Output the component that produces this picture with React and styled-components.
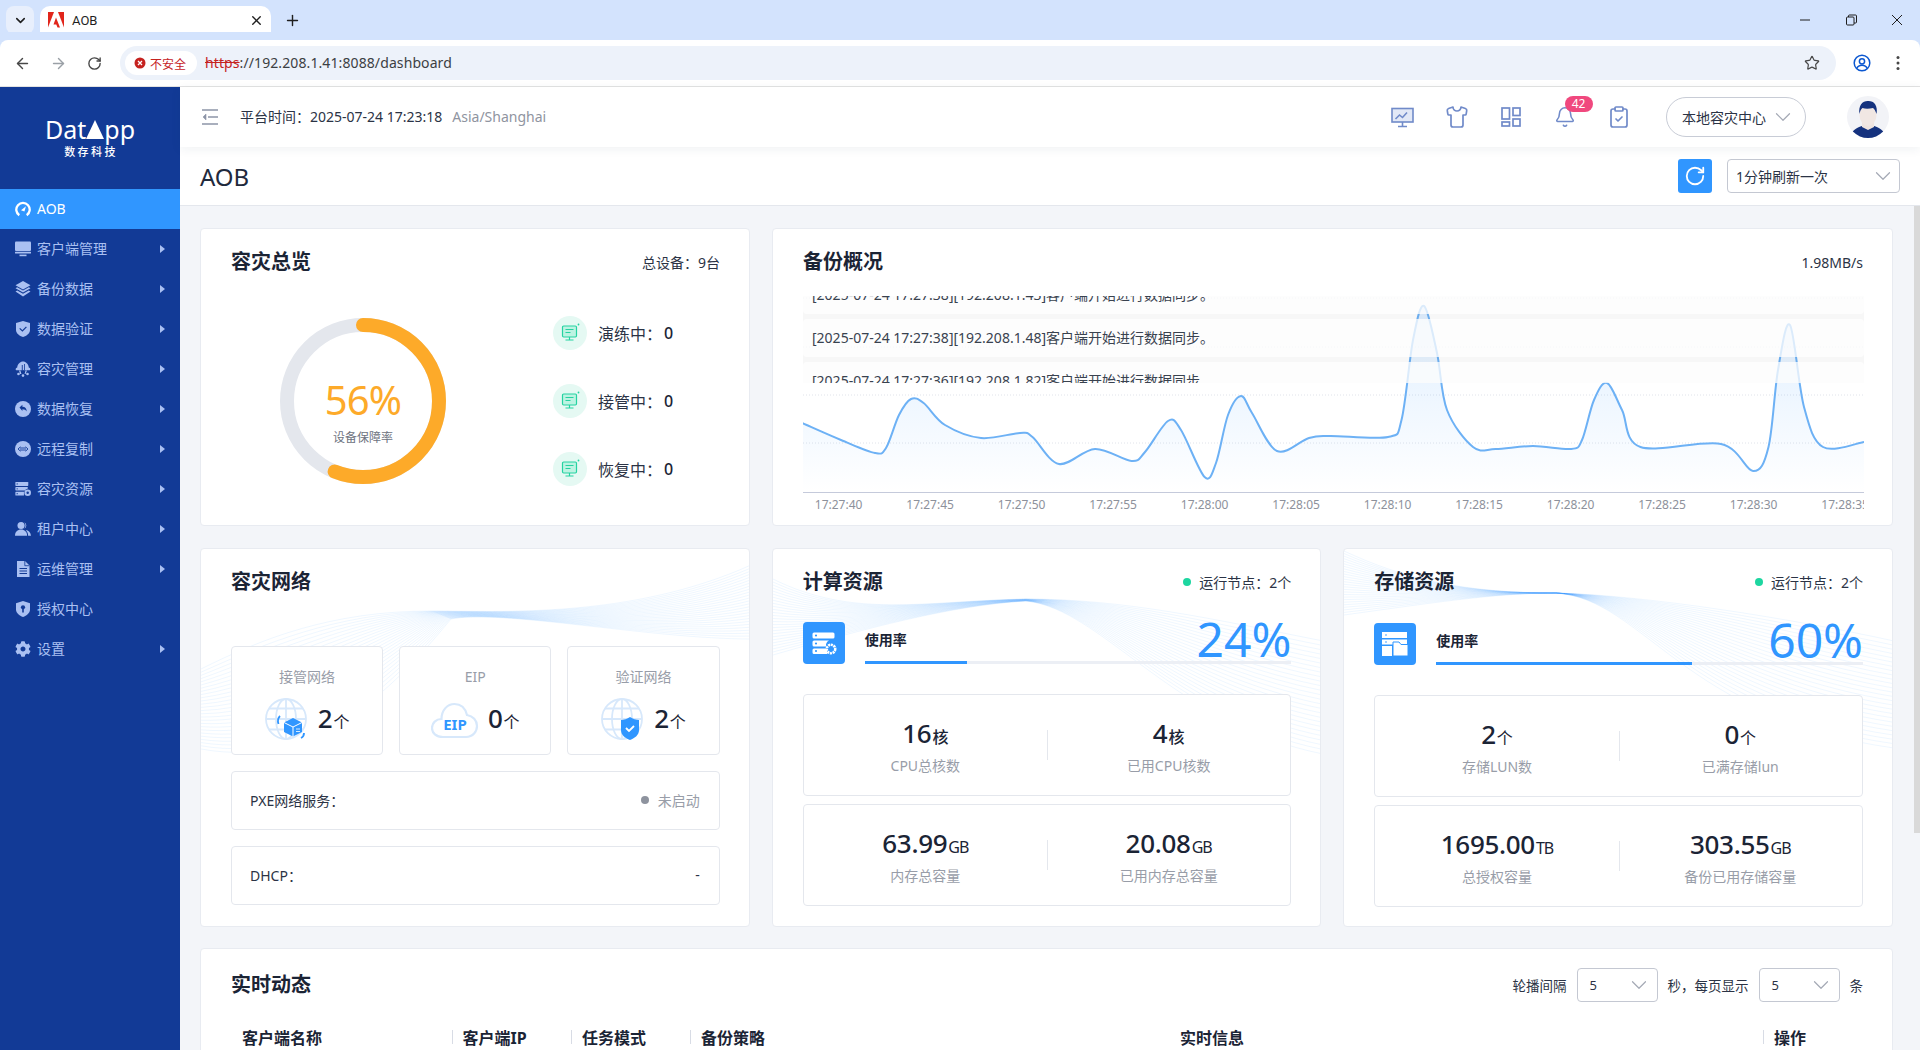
import React from 'react';
import styled, { createGlobalStyle } from 'styled-components';
import { FaCog } from 'react-icons/fa';
import { ChevronDown, X, Plus, ArrowLeft, ArrowRight, RotateCw, Star, Shirt, Bell, ClipboardCheck } from 'lucide-react';

const SANS = `"Noto Sans", "Noto Sans CJK SC", sans-serif`;

const Global = createGlobalStyle`
  html, body { margin: 0; height: 100%; overflow: hidden; background: #fff; }
  body { font-family: ${SANS}; font-size: 14px; color: #2b3345; }
  #root { height: 100%; }
  * { box-sizing: border-box; }
`;

const Window = styled.div`display: flex; flex-direction: column; height: 1050px; width: 1920px;`;

/* browser chrome */
const TabStrip = styled.div`
  height: 40px; background: #d3e3fd; display: flex; align-items: flex-end; padding-left: 6px; flex: none;
`;
const TabMenu = styled.div`
  width: 28px; height: 28px; margin: 0 6px 6px 0; border-radius: 8px; background: #e8effc;
  display: flex; align-items: center; justify-content: center; color: #1f1f1f;
`;
const Tab = styled.div`
  position: relative; width: 231px; height: 34px; background: #fff; border-radius: 10px 10px 0 0;
  display: flex; align-items: center; padding: 0 7px 6px 8px; gap: 8px;
  font-family: Roboto, "Noto Sans CJK SC", sans-serif; font-size: 13px; color: #1f1f1f;
  &::before, &::after { content: ''; position: absolute; bottom: 0; width: 8px; height: 8px; }
  &::before { left: -8px; background: radial-gradient(circle at 0 0, transparent 8px, #fff 8.5px); }
  &::after { right: -8px; background: radial-gradient(circle at 100% 0, transparent 8px, #fff 8.5px); }
`;
const TabTitle = styled.span`flex: 1;`;
const NewTab = styled.div`margin: 0 0 6px 7px; height: 28px; width: 28px; display: flex; align-items: center; justify-content: center; color: #1f1f1f;`;
const WinControls = styled.div`
  margin-left: auto; align-self: flex-start; height: 40px; display: flex; align-items: center; color: #1f1f1f;
`;
const WinBtn = styled.div`width: 46px; display: flex; justify-content: center; align-items: center;`;
const Toolbar = styled.div`
  height: 47px; flex: none; background: #fff; border-radius: 8px 8px 0 0; border-bottom: 1px solid #e3e3e3;
  display: flex; align-items: center; position: relative;
  box-shadow: 0 -8px 0 0 #d3e3fd;
`;
const NavBtn = styled.div`
  width: 36px; height: 34px; display: flex; align-items: center; justify-content: center;
  color: ${p => p.$dim ? '#9aa0a6' : '#474747'}; flex: none;
`;
const NavGroup = styled.div`display: flex; padding-left: 4px; width: 120px; flex: none;`;
const Omnibox = styled.div`
  width: 1716px; height: 34px; border-radius: 17px; background: #edf2fa; flex: none;
  display: flex; align-items: center; padding: 0 16px 0 5px; font-family: "Noto Sans", sans-serif; font-size: 14px; color: #3c4043;
`;
const Chip = styled.div`
  height: 24px; width: 72px; border-radius: 12px; background: #fff; display: flex; align-items: center;
  gap: 4px; padding-left: 9px; font-family: "Noto Sans CJK SC", sans-serif; font-size: 12px; color: #c5221f; flex: none; margin-right: 8px;
`;
const UrlText = styled.span`letter-spacing: .1px; padding-bottom: 2px; white-space: nowrap;`;
const Scheme = styled.span`color: #c5221f; text-decoration: line-through;`;
const StarWrap = styled.div`margin-left: auto; display: flex; color: #474747;`;
const ToolEnd = styled.div`display: flex; align-items: center; gap: 25px; padding-left: 16.5px; color: #474747;`;

/* app */
const AppShell = styled.div`flex: 1; min-height: 0; display: flex;`;
const Sidebar = styled.aside`width: 180px; flex: none; background: #123a96; color: #aac0f2;`;
const Logo = styled.div`
  height: 102px; display: flex; flex-direction: column; align-items: center; padding-top: 26px; color: #fff;
`;
const LogoMark = styled.div`
  display: flex; align-items: center; font-family: "Noto Sans", sans-serif; font-size: 25px; line-height: 32px;
`;
const LogoSub = styled.div`
  font-family: "Noto Sans CJK SC", sans-serif; font-weight: 500; font-size: 11px; letter-spacing: 2.4px; line-height: 14px; margin-top: -1px; padding-left: 2px;
`;
const MenuItem = styled.div`
  height: 40px; display: flex; align-items: center; padding: 0 15.5px 0 15px; gap: 6px;
  background: ${p => p.$active ? '#3096ff' : 'transparent'}; color: ${p => p.$active ? '#fff' : '#aac0f2'};
`;
const MenuIcon = styled.span`width: 16px; height: 16px; display: flex; flex: none; font-size: 16px;`;
const MenuLabel = styled.span`flex: 1; font-size: 14px; padding-bottom: 2px;`;
const Caret = styled.span`
  width: 0; height: 0; border-style: solid; border-width: 4.5px 0 4.5px 5px; border-color: transparent transparent transparent #aac0f2;
`;

const Main = styled.div`flex: 1; min-width: 0; display: flex; flex-direction: column; background: #f3f5f9;`;
const Header = styled.header`
  height: 60px; flex: none; background: #fff; display: flex; align-items: center; padding: 0 31px 0 22px;
  box-shadow: 0 2px 10px rgba(30, 50, 90, .07); position: relative; z-index: 2;
`;
const Toggle = styled.div`width: 16px; height: 16px; color: #8d95a8; margin-right: 22px; display: flex;`;
const HeaderText = styled.span`color: #2b3345; white-space: nowrap; padding-bottom: 2px;`;
const HeaderZone = styled.span`color: #8f94a0; margin-left: 10px; white-space: nowrap; padding-bottom: 2px;`;
const HeadIcons = styled.div`margin-left: auto; display: flex; align-items: center; color: #708ac9;`;
const HeadIcon = styled.div`
  position: relative; width: 24px; height: 24px; display: flex; align-items: center; justify-content: center; margin-left: ${p => p.$gap}px;
`;
const Badge = styled.span`
  position: absolute; left: 12px; top: -9px; width: 28px; height: 16px; border-radius: 8px; background: #f0487e;
  color: #fff; font-size: 12px; line-height: 16px; text-align: center;
`;
const Center = styled.div`
  margin-left: 35.5px; width: 140px; height: 40px; border: 1px solid #c8ccd6; border-radius: 20px; display: flex; align-items: center;
  justify-content: space-between; padding: 0 9px 0 15px; color: #2b3345; white-space: nowrap;
`;
const Chev = styled(ChevronDown)`color: #a4a9b5; flex: none;`;
const Avatar = styled.div`margin-left: 41px; width: 42px; height: 42px; flex: none; display: flex;`;

const TitleBar = styled.div`
  height: 59px; flex: none; background: #fff; border-bottom: 1px solid #e4e7ed; display: flex; align-items: center;
  padding: 0 20px; font-size: 24px; color: #1f2a3d;
`;
const TitleTools = styled.div`margin-left: auto; display: flex; align-items: center; gap: 15px;`;
const RefreshBtn = styled.div`
  width: 34px; height: 34px; border-radius: 3px; background: #3096ff; color: #fff; display: flex; align-items: center; justify-content: center;
`;
const Select = styled.div`
  width: ${p => p.$w}px; height: 34px; border: 1px solid #c4c8d2; border-radius: 4px; background: #fff; display: flex; align-items: center;
  justify-content: space-between; padding: 0 ${p => p.$pr}px 0 ${p => p.$pl}px; font-size: ${p => p.$fs || 14}px; color: #2b3345; white-space: nowrap; flex: none;
`;

const ScrollArea = styled.div`flex: 1; min-height: 0; display: flex;`;
const Scroll = styled.div`flex: 1; min-width: 0; overflow: hidden; padding: 22px 21px 20px 20px;`;
const Rail = styled.div`width: 6px; flex: none;`;
const Thumb = styled.div`height: 627px; background: #d9d9d9;`;
const TopRow = styled.div`display: grid; grid-template-columns: 550px 1fr; gap: 22px;`;
const MidRow = styled.div`display: grid; grid-template-columns: repeat(3, 1fr); gap: 22px; margin-top: 22px;`;

const Card = styled.section`
  position: relative; isolation: isolate; overflow: hidden; background: #fff; border: 1px solid #e8ebf1; border-radius: 4px;
  padding: 0 29px 0 30px; height: ${p => p.$h}px; margin-top: ${p => p.$mt || 0}px;
`;
const CardHead = styled.div`height: ${p => p.$h || 66}px; display: flex; align-items: center; justify-content: space-between;`;
const CardTitle = styled.h2`margin: 0; font-size: 20px; font-weight: 700; color: #1b2435; line-height: 28px;`;
const CardNote = styled.div`display: flex; align-items: center; gap: 8px; font-size: 14px; color: #2b3345; white-space: nowrap;`;
const Dot = styled.i`width: 8px; height: 8px; border-radius: 50%; background: ${p => p.$c}; flex: none;`;

/* overview */
const OverviewBody = styled.div`display: flex; align-items: flex-start; padding: 23px 0 0 49px; gap: 107px;`;
const Donut = styled.div`position: relative; width: 166px; height: 166px; flex: none;`;
const DonutText = styled.div`
  position: absolute; inset: 0; display: flex; flex-direction: column; align-items: center; justify-content: center;
`;
const DonutValue = styled.div`font-size: 40px; line-height: 50px; color: #fdaa29; letter-spacing: -.8px; margin-top: 20px;`;
const DonutLabel = styled.div`font-size: 12px; line-height: 18px; color: #6d7280; margin-top: 4px;`;
const Stats = styled.div`display: flex; flex-direction: column; gap: 34px; margin-top: -2px;`;
const Stat = styled.div`display: flex; align-items: center; gap: 11px; font-size: 16px; color: #2b3345;`;
const StatIcon = styled.div`
  width: 34px; height: 34px; border-radius: 50%; background: #e5f9f3; display: flex; align-items: center; justify-content: center; flex: none;
`;
const StatValue = styled.span`font-weight: 500; color: #1b2435; margin-left: -9px;`;

/* backup */
const ChartWrap = styled.div`position: relative; margin-right: -1px; height: 225px;`;
const ChartSvg = styled.svg`display: block;`;
const LogList = styled.div`
  position: absolute; left: 0; right: 0; top: 1px; height: 87px; overflow: hidden; display: flex; flex-direction: column; gap: 5px;
  background: rgba(60, 60, 60, .04);
`;
const LogItem = styled.div`
  flex: none; height: 38px; line-height: 38px; padding: 0 9px; border-radius: 4px; background: rgba(255, 255, 255, .76); color: #39424f; font-size: 14px; white-space: nowrap;
  margin-top: ${p => p.$first ? -20 : 0}px;
`;

/* network */
const NetRow = styled.div`display: grid; grid-template-columns: repeat(3, 1fr); gap: 16px; margin-top: 31px;`;
const NetBox = styled.div`
  height: 109px; border: 1px solid #e4e7ed; border-radius: 4px; background: #fff; display: flex; flex-direction: column; align-items: center; padding-top: 20px;
`;
const NetName = styled.div`font-size: 14px; line-height: 20px; color: #989da8;`;
const NetValue = styled.div`display: flex; align-items: center; gap: 9px; margin-top: 12px; height: 42px;`;
const Num = styled.div`color: #1b2435; font-size: 26px; font-weight: 500; letter-spacing: -.3px; line-height: 34px; white-space: nowrap;`;
const Unit = styled.span`font-size: 16px; font-weight: ${p => p.$b ? 500 : 400}; letter-spacing: ${p => p.$tight ? '-1px' : '0'}; margin-left: 1px;`;
const InfoRow = styled.div`
  height: 59px; margin-top: 16px; border: 1px solid #e4e7ed; border-radius: 4px; background: #fff; display: flex; align-items: center;
  justify-content: space-between; padding: 0 19px 2px 18px; color: #2b3345;
`;
const Off = styled.div`display: flex; align-items: center; gap: 9px; color: #989da8;`;

/* resources */
const UseRow = styled.div`display: flex; gap: 20px; margin-top: ${p => p.$mt}px;`;
const Tile = styled.div`
  width: 42px; height: 42px; border-radius: 4px; background: #3096ff; flex: none; display: flex; align-items: center; justify-content: center;
`;
const Meter = styled.div`flex: 1; display: flex; flex-direction: column; justify-content: space-between;`;
const MeterHead = styled.div`display: flex; justify-content: space-between; align-items: flex-start; height: 39px;`;
const MeterLabel = styled.div`font-size: 14px; font-weight: 700; line-height: 20px; margin-top: 8px; color: #1b2435;`;
const Percent = styled.div`font-size: 48px; line-height: 34px; color: #3096ff;`;
const Track = styled.div`height: 3px; background: #eceff5;`;
const Fill = styled.div`height: 3px; width: ${p => p.$pct}%; background: #3096ff;`;
const Boxes = styled.div`display: flex; flex-direction: column; gap: 8px; margin-top: 30px;`;
const Box = styled.div`
  height: 102px; border: 1px solid #e4e7ed; border-radius: 4px; background: #fff; display: grid; grid-template-columns: 1fr 1fr; position: relative;
  align-items: center; padding-top: 2px;
  &::before { content: ''; position: absolute; left: 50%; top: 35px; height: 30px; border-left: 1px solid #e4e7ed; }
`;
const Cell = styled.div`display: flex; flex-direction: column; align-items: center;`;
const CellLabel = styled.div`font-size: 14px; line-height: 20px; color: #989da8; margin-top: 2px; white-space: nowrap;`;

/* live */
const LiveTools = styled.div`display: flex; align-items: center; gap: 10px; font-size: 13.5px; color: #2b3345;`;
const TableHead = styled.div`
  display: grid; grid-template-columns: 220.6px 119.4px 119px 479px 594px 100px; height: 32px; align-items: center;
`;
const HeadCell = styled.div`
  height: 14px; display: flex; align-items: center; padding-left: 10px; font-size: 16px; font-weight: 700; color: #1b2435; white-space: nowrap;
  border-left: 1px solid ${p => p.$sep ? '#d8dce5' : 'transparent'};
`;

/* ---------- drawings ---------- */
const bg = '#123a96';
const icons = {
  gauge: <svg viewBox="0 0 16 16" width="16" height="16" fill="none"><path d="M4.3 14.2A6.7 6.7 0 1 1 11.7 14.2" stroke="currentColor" strokeWidth="2.3"/><path d="M11 5.2 9.4 10.6 6 9.2Z" fill="currentColor"/></svg>,
  monitor: <svg viewBox="0 0 16 16" width="16" height="16" fill="currentColor"><rect y="0.5" width="16" height="9.5" rx="1"/><rect y="10.8" width="16" height="1.8" rx=".5"/><rect x="4.5" y="13.6" width="7" height="1.6"/></svg>,
  layers: <svg viewBox="0 0 16 16" width="16" height="16" fill="currentColor"><path d="M8 0 15.5 4.3 8 8.6.5 4.3Z"/><path d="M.5 7.2 2.2 6.2 8 9.6l5.8-3.4 1.7 1L8 11.6Z"/><path d="M.5 10.4 2.2 9.4 8 12.8l5.8-3.4 1.7 1L8 15.4Z"/></svg>,
  shield: <svg viewBox="0 0 16 16" width="16" height="16"><path d="M8 0 15 2v7c0 3.4-3.4 5.8-7 7-3.6-1.2-7-3.6-7-7V2Z" fill="currentColor"/><path d="M4.7 7.4 7.4 10l4-4.2" fill="none" stroke={bg} strokeWidth="1.2"/></svg>,
  cloud: <svg viewBox="0 0 16 16" width="16" height="16" fill="currentColor"><path d="M1.2 9.3C.2 8.6.6 6.6 2.2 6.4 2.6 3 5.2.6 8 .6s5.4 2.4 5.8 5.8c1.6.2 2 2.2 1 2.9Z"/><path d="M6.8 4h.9v5.2h-.9zM9.2 3h.8v6.2h-.8zM7.6 9h.8v4.5h-.8z" fill={bg}/><path d="M4 9.5h1.4l1 3.5H5Zm6.5 0H12l-1.400 3.500H9.600Z"/><circle cx="8" cy="14.600" r="1.300"/><circle cx="3.500" cy="13" r="1.300"/><circle cx="12.500" cy="13" r="1.300"/></svg>,
  restore: <svg viewBox="0 0 16 16" width="16" height="16"><circle cx="8" cy="8" r="8" fill="currentColor"/><path d="M4.500 6.600 7.400 3.800v1.900c2.800 0 4.300 1.800 4.300 4.900-.9-1.700-2.100-2.400-4.300-2.400v1.800Z" fill={bg}/></svg>,
  remote: <svg viewBox="0 0 16 16" width="16" height="16"><circle cx="8" cy="8" r="8" fill="currentColor"/><path d="M5.500 5.800 3 8l2.500 2.200M10.500 5.800 13 8l-2.500 2.200M5 7h6M5 9h6" fill="none" stroke={bg} strokeWidth=".9"/></svg>,
  server: <svg viewBox="0 0 17 16" width="17" height="16" fill="currentColor"><path d="M1 .5h12.500a.6.600 0 0 1 .6.600v3a.6.600 0 0 1-.6.600H1a.6.600 0 0 1-.6-.600v-3A.6.600 0 0 1 1 .5Z"/><path d="M1 6h12.500v1.800a3.600 3.600 0 0 0-3 1.700H1a.6.600 0 0 1-.6-.600V6.600A.6.600 0 0 1 1 6ZM1 11h8.500v4H1a.6.600 0 0 1-.6-.600v-2.800A.6.600 0 0 1 1 11Z"/><circle cx="13.500" cy="12" r="3.500"/><circle cx="13.500" cy="12" r="1.300" fill={bg}/><circle cx="2.300" cy="2.600" r=".7" fill={bg}/><circle cx="2.300" cy="7.800" r=".7" fill={bg}/><circle cx="2.300" cy="13" r=".7" fill={bg}/></svg>,
  users: <svg viewBox="0 0 18 16" width="18" height="16" fill="currentColor"><circle cx="6.800" cy="4" r="4"/><path d="M0 15.500c0-4 2.800-6.800 6.800-6.800s6.800 2.800 6.800 6.800Z"/><path d="M10.500 .5a4 4 0 0 1 0 7.200c1.800-1.800 1.800-5.400 0-7.200ZM12 9c3.300.2 5.600 2.800 6 6.500h-3.200c0-2.600-1.100-4.800-2.800-6.500Z"/></svg>,
  file: <svg viewBox="0 0 16 16" width="16" height="16"><path d="M2 0h8l4.500 4.500V16H2Z" fill="currentColor"/><path d="M9.800 0v4.700h4.700" fill="none" stroke={bg} strokeWidth=".8"/><path d="M4.500 7.500h7.500M4.500 10h7.500M4.500 12.500h7.500" stroke={bg} strokeWidth="1"/></svg>,
  auth: <svg viewBox="0 0 16 16" width="16" height="16"><path d="M8 0 15 2.200v6.300c0 3.600-3.400 6.200-7 7.500-3.600-1.300-7-3.900-7-7.500V2.200Z" fill="currentColor"/><circle cx="8" cy="6.300" r="2.100" fill={bg}/><path d="M7.200 7.500h1.600v4H7.200Z" fill={bg}/></svg>,
  cog: <FaCog size={16}/>,
};

const menu = [
  ['AOB', 'gauge', false],
  ['客户端管理', 'monitor', true],
  ['备份数据', 'layers', true],
  ['数据验证', 'shield', true],
  ['容灾管理', 'cloud', true],
  ['数据恢复', 'restore', true],
  ['远程复制', 'remote', true],
  ['容灾资源', 'server', true],
  ['租户中心', 'users', true],
  ['运维管理', 'file', true],
  ['授权中心', 'auth', false],
  ['设置', 'cog', true],
];

const catmull = pts => {
  let d = `M${pts[0][0]} ${pts[0][1]}`;
  for (let i = 0; i < pts.length - 1; i++) {
    const p0 = pts[Math.max(i - 1, 0)], p1 = pts[i], p2 = pts[i + 1], p3 = pts[Math.min(i + 2, pts.length - 1)];
    const c1x = p1[0] + (p2[0] - p0[0]) / 6, c1y = p1[1] + (p2[1] - p0[1]) / 6;
    const c2x = p2[0] - (p3[0] - p1[0]) / 6, c2y = p2[1] - (p3[1] - p1[1]) / 6;
    d += ` C${c1x.toFixed(1)} ${c1y.toFixed(1)} ${c2x.toFixed(1)} ${c2y.toFixed(1)} ${p2[0]} ${p2[1]}`;
  }
  return d;
};

const curve = [
  [802,423],[841,440],[875,453],[886,448],[899,415],[911,399],[923.6,403],[945,425],[981,438],[1020,433],[1032.5,437],[1059,464],[1095,449],[1131.4,461],[1145,452],[1168,421],[1181,430],[1204.6,477],[1216,463],[1228,415],[1241,396],[1252,413],[1277,451],[1309,438],[1330,436],[1388,437],[1401.5,420],[1413,340],[1424,306],[1437,353],[1447,410],[1473,447],[1495.6,449],[1533,446],[1571,449],[1582,440],[1594,400],[1607,383],[1622,410],[1640.5,447],[1721,444],[1753,471],[1768.5,447],[1778,370],[1790,325],[1804,407],[1823,447],[1864,442],
];
const times = ['17:27:40','17:27:45','17:27:50','17:27:55','17:28:00','17:28:05','17:28:10','17:28:15','17:28:20','17:28:25','17:28:30','17:28:35'];

const BackupChart = () => {
  const line = catmull(curve);
  return (
    <ChartSvg width="1061" height="225" viewBox="803 295 1061 225">
      <defs>
        <linearGradient id="areaFill" x1="0" y1="305" x2="0" y2="492" gradientUnits="userSpaceOnUse">
          <stop offset="0" stopColor="#3096ff" stopOpacity=".16"/>
          <stop offset="1" stopColor="#3096ff" stopOpacity="0"/>
        </linearGradient>
      </defs>
      {[298, 347, 395, 443].map(y => <line key={y} x1="803" x2="1864" y1={y} y2={y} stroke="#e0e3ea" strokeDasharray="1 2"/>)}
      <path d={`${line} L1864 492 L802 492 Z`} fill="url(#areaFill)"/>
      <path d={line} fill="none" stroke="#6db1f5" strokeWidth="2"/>
      <line x1="803" x2="1864" y1="492.500" y2="492.500" stroke="#c5cadb"/>
      {times.map((t, i) => (
        <text key={t} x={838.6 + i * 91.5} y="509" textAnchor="middle" fontSize="12" fill="#8d919b" fontFamily={SANS}>{t}</text>
      ))}
    </ChartSvg>
  );
};

const WaveSvg = styled.svg`position: absolute; left: 0; top: 0; z-index: -1; pointer-events: none;`;
const Wave = ({ a, b, n = 26 }) => {
  const paths = [];
  for (let i = 0; i < n; i++) {
    const t = i / (n - 1);
    const v = a.map((x, k) => x + (b[k] - x) * t);
    paths.push(`M${v[0]} ${v[1]}C${v[2]} ${v[3]} ${v[4]} ${v[5]} ${v[6]} ${v[7]}C${v[8]} ${v[9]} ${v[10]} ${v[11]} ${v[12]} ${v[13]}`);
  }
  return (
    <WaveSvg width="550" height="379" viewBox="0 0 550 379" fill="none">
      {paths.map((d, i) => <path key={i} d={d} stroke="#3096ff" strokeOpacity=".1" strokeWidth=".8"/>)}
    </WaveSvg>
  );
};

const StatGlyph = () => (
  <svg width="20" height="20" viewBox="0 0 20 20" fill="none" stroke="#25d3a1" strokeWidth="1.200">
    <rect x="2.500" y="3" width="14" height="11" rx="1.200" fill="#bdf3e2"/>
    <path d="M5.500 6.500h8M5.500 9.500h5M9.500 14v3M5.500 17h8"/>
    <circle cx="18.500" cy="1.500" r=".9" fill="#25d3a1" stroke="none"/>
  </svg>
);

const Globe = ({ children }) => (
  <svg width="44" height="44" viewBox="0 0 44 44" fill="none">
    <g stroke="#d7e8fb" strokeWidth="1.800">
      <circle cx="21" cy="21" r="20"/><ellipse cx="21" cy="21" rx="10" ry="20"/><path d="M21 1v40M1 21h40M4 10.500h34M4 31.500h34"/>
    </g>
    {children}
  </svg>
);

const NetIcon1 = () => (
  <Globe>
    <path d="M28 20 37 24.500V34L28 38.500 19 34V24.500Z" fill="#3096ff"/>
    <path d="M19 24.500 28 29 37 24.500M28 29V38.500" stroke="#fff"/>
    <path d="M31 31h4M31 33.500h4" stroke="#fff" strokeWidth=".8"/>
    <path d="M15 18c-2 2-2.500 5-1.500 8M36 40c2-1 3-3 3-5" stroke="#3096ff" strokeWidth="1.800"/>
  </Globe>
);
const NetIcon2 = () => (
  <svg width="48" height="38" viewBox="0 0 48 38">
    <path d="M12 36C5 36 1 32 1 27s4-9 9.500-9c0-9 6-15 13-15s11 5 12.500 11c6 1 10 5.500 10 11s-4 11-11 11Z" fill="#fff" stroke="#d7e8fb" strokeWidth="2.200"/>
    <text x="24" y="29" textAnchor="middle" fontSize="15" fontWeight="700" fill="#3096ff" fontFamily={SANS}>EIP</text>
  </svg>
);
const NetIcon3 = () => (
  <Globe>
    <path d="M29 19c3 2 6 3 9 3v10c0 5-4 8-9 10-5-2-9-5-9-10V22c3 0 6-1 9-3Z" fill="#3096ff"/>
    <path d="M25 30l3 3 5-5" fill="none" stroke="#fff" strokeWidth="1.800"/>
  </Globe>
);

const ServerGear = () => (
  <svg width="26" height="26" viewBox="0 0 26 26">
    <path d="M3 2.500h19a1.500 1.500 0 0 1 1.500 1.500v3a1.500 1.500 0 0 1-1.500 1.500H3A1.500 1.500 0 0 1 1.500 7V4A1.500 1.500 0 0 1 3 2.500Z" fill="#fff"/>
    <path d="M3 10.500h15a6 6 0 0 0-3 6H3A1.500 1.500 0 0 1 1.500 15v-3A1.500 1.500 0 0 1 3 10.500Z" fill="#fff"/>
    <path d="M3 18.500h12.500l1 5.500H3a1.500 1.500 0 0 1-1.500-1.500V20A1.500 1.500 0 0 1 3 18.500Z" fill="#fff"/>
    <circle cx="20" cy="19" r="4" fill="none" stroke="#fff" strokeWidth="3" strokeDasharray="2 .6"/>
    <circle cx="20" cy="19" r="2.500" fill="none" stroke="#3096ff" strokeWidth="1"/>
    <circle cx="5" cy="5.500" r="1.100" fill="#3096ff"/><circle cx="5" cy="13.500" r="1.100" fill="#3096ff"/><circle cx="5" cy="21" r="1.100" fill="#3096ff"/>
  </svg>
);
const StorageGlyph = () => (
  <svg width="28" height="26" viewBox="0 0 28 26" fill="#fff">
    <rect x="1" y="1" width="25" height="6"/><rect x="1" y="8.500" width="25" height="5"/>
    <rect x="1" y="15" width="10" height="10"/>
    <path d="M12 11h6l2 2.500h7V25H12Z" stroke="#3096ff" strokeWidth="1"/>
    <circle cx="5" cy="4" r=".8" fill="#3096ff"/><circle cx="5" cy="11" r=".8" fill="#3096ff"/>
  </svg>
);

const Stack2 = ({ n, u, b, tight }) => <Num>{n}<Unit $b={b} $tight={tight}>{u}</Unit></Num>;

const Tiny = ({ children }) => <svg width="14" height="14" viewBox="0 0 14 14" fill="none" stroke="currentColor" strokeWidth="1">{children}</svg>;

const BigChev = () => <Chev size={26} strokeWidth={1.100}/>;

export default function App() {
  return (
    <Window>
      <Global/>
      <TabStrip>
        <TabMenu><ChevronDown size={15} strokeWidth={2.500}/></TabMenu>
        <Tab>
          <svg width="16" height="16" viewBox="0 0 16 16">
            <path d="M0 0h6L0 15.500Z" fill="#e1251b"/><path d="M10 0h6v15.500Z" fill="#e1251b"/><path d="M8 5.500l4 10H9.500L8.300 12.500H5.500Z" fill="#e1251b"/>
          </svg>
          <TabTitle>AOB</TabTitle>
          <X size={15} strokeWidth={2.200}/>
        </Tab>
        <NewTab><Plus size={17} strokeWidth={2}/></NewTab>
        <WinControls>
          <WinBtn><Tiny><path d="M2 7h10"/></Tiny></WinBtn>
          <WinBtn><Tiny><rect x="2.500" y="4" width="7.500" height="8" rx="1"/><path d="M4.500 4V3a1 1 0 0 1 1-1h6a1 1 0 0 1 1 1v6a1 1 0 0 1-1 1h-1.500"/></Tiny></WinBtn>
          <WinBtn><Tiny><path d="M2 2l10 10M12 2 2 12"/></Tiny></WinBtn>
        </WinControls>
      </TabStrip>
      <Toolbar>
        <NavGroup>
          <NavBtn><ArrowLeft size={17} strokeWidth={2}/></NavBtn>
          <NavBtn $dim><ArrowRight size={17} strokeWidth={2}/></NavBtn>
          <NavBtn><RotateCw size={15} strokeWidth={2.200}/></NavBtn>
        </NavGroup>
        <Omnibox>
          <Chip>
            <svg width="12" height="12" viewBox="0 0 12 12"><circle cx="6" cy="6" r="5.500" fill="#c5221f"/><path d="M4 4l4 4M8 4 4 8" stroke="#fff" strokeWidth="1.300"/></svg>
            不安全
          </Chip>
          <UrlText><Scheme>https</Scheme>://192.208.1.41:8088/dashboard</UrlText>
          <StarWrap><Star size={16} strokeWidth={1.800}/></StarWrap>
        </Omnibox>
        <ToolEnd>
          <svg width="18" height="18" viewBox="0 0 18 18" fill="none" stroke="#0b57d0" strokeWidth="1.500"><circle cx="9" cy="9" r="7.800"/><circle cx="9" cy="7.300" r="2.600"/><path d="M3.800 14.500c1-2.400 3-3.200 5.200-3.200s4.200.8 5.200 3.200"/></svg>
          <svg width="4" height="16" viewBox="0 0 4 16" fill="#474747"><circle cx="2" cy="2.500" r="1.500"/><circle cx="2" cy="8" r="1.500"/><circle cx="2" cy="13.500" r="1.500"/></svg>
        </ToolEnd>
      </Toolbar>
      <AppShell>
        <Sidebar>
          <Logo>
            <LogoMark>
              Dat
              <svg width="18" height="19" viewBox="0 0 18 19"><path d="M9 0 18 19H0Z" fill="#fff"/></svg>
              pp
            </LogoMark>
            <LogoSub>数存科技</LogoSub>
          </Logo>
          {menu.map(([label, ic, arrow], i) => (
            <MenuItem key={label} $active={i === 0}>
              <MenuIcon>{icons[ic]}</MenuIcon>
              <MenuLabel>{label}</MenuLabel>
              {arrow && <Caret/>}
            </MenuItem>
          ))}
        </Sidebar>
        <Main>
          <Header>
            <Toggle>
              <svg width="16" height="16" viewBox="0 0 16 16" fill="none" stroke="currentColor" strokeWidth="1.600"><path d="M0 1h16M6 8h10M0 15h16"/><path d="M4 5 1 8l3 3Z" fill="currentColor" strokeWidth=".6"/></svg>
            </Toggle>
            <HeaderText>平台时间：2025-07-24 17:23:18</HeaderText>
            <HeaderZone>Asia/Shanghai</HeaderZone>
            <HeadIcons>
              <HeadIcon $gap={0}>
                <svg width="23" height="21" viewBox="0 0 23 21" fill="none" stroke="currentColor" strokeWidth="1.600"><rect x="1" y="1.500" width="21" height="13.500" fill="#e2e8f6"/><path d="M4.500 12l4-4 3 2.500L16 5.500M11.500 15v4.500M7 19.500h9"/></svg>
              </HeadIcon>
              <HeadIcon $gap={30}><Shirt size={24} strokeWidth={1.700}/></HeadIcon>
              <HeadIcon $gap={30}>
                <svg width="20" height="20" viewBox="0 0 20 20" fill="none" stroke="currentColor" strokeWidth="1.700"><rect x="1" y="1" width="7.500" height="11"/><rect x="12" y="1" width="7" height="7.500"/><rect x="1" y="15" width="7.500" height="4"/><rect x="12" y="12" width="7" height="7"/></svg>
              </HeadIcon>
              <HeadIcon $gap={30}><Bell size={22} strokeWidth={1.700}/><Badge>42</Badge></HeadIcon>
              <HeadIcon $gap={30}><ClipboardCheck size={24} strokeWidth={1.700}/></HeadIcon>
            </HeadIcons>
            <Center>本地容灾中心<BigChev/></Center>
            <Avatar>
              <svg width="42" height="42" viewBox="0 0 42 42">
                <defs><clipPath id="av"><circle cx="21" cy="21" r="21"/></clipPath></defs>
                <g clipPath="url(#av)">
                  <rect width="42" height="42" fill="#f2f3f7"/>
                  <path d="M3 42c1-8 8-11 12-12l6 3 6-3c4 1 11 4 12 12Z" fill="#15327e"/>
                  <path d="M15 27v4l6 3 6-3v-4Z" fill="#efe4df"/>
                  <ellipse cx="21" cy="19" rx="8.500" ry="11" fill="#f1e7e3"/>
                  <path d="M12.500 18C11 9 16 4.500 21.500 5 27 5 31 9.500 29.500 18c-1-3-2-5-3.500-6-4 1-8 1-10.500 0-1.500 1-2.500 3-3 6Z" fill="#15327e"/>
                </g>
              </svg>
            </Avatar>
          </Header>
          <TitleBar>
            AOB
            <TitleTools>
              <RefreshBtn><RotateCw size={22} strokeWidth={2}/></RefreshBtn>
              <Select $w={173} $pl={8} $pr={3}>1分钟刷新一次<BigChev/></Select>
            </TitleTools>
          </TitleBar>
          <ScrollArea>
            <Scroll>
              <TopRow>
                <Card $h={298}>
                  <CardHead>
                    <CardTitle>容灾总览</CardTitle>
                    <CardNote>总设备：9台</CardNote>
                  </CardHead>
                  <OverviewBody>
                    <Donut>
                      <svg width="166" height="166" viewBox="0 0 166 166" fill="none">
                        <circle cx="83" cy="83" r="76" stroke="#e4e7ed" strokeWidth="14"/>
                        <circle cx="83" cy="83" r="76" stroke="#fdaa29" strokeWidth="14" strokeLinecap="round"
                          strokeDasharray={`${2 * Math.PI * 76 * 0.56} ${2 * Math.PI * 76}`} transform="rotate(-90 83 83)"/>
                      </svg>
                      <DonutText>
                        <DonutValue>56%</DonutValue>
                        <DonutLabel>设备保障率</DonutLabel>
                      </DonutText>
                    </Donut>
                    <Stats>
                      {['演练中', '接管中', '恢复中'].map(l => (
                        <Stat key={l}><StatIcon><StatGlyph/></StatIcon><span>{l}：</span><StatValue>0</StatValue></Stat>
                      ))}
                    </Stats>
                  </OverviewBody>
                </Card>
                <Card $h={298}>
                  <CardHead>
                    <CardTitle>备份概况</CardTitle>
                    <CardNote>1.98MB/s</CardNote>
                  </CardHead>
                  <ChartWrap>
                    <BackupChart/>
                    <LogList>
                      <LogItem $first>[2025-07-24 17:27:38][192.208.1.43]客户端开始进行数据同步。</LogItem>
                      <LogItem>[2025-07-24 17:27:38][192.208.1.48]客户端开始进行数据同步。</LogItem>
                      <LogItem>[2025-07-24 17:27:36][192.208.1.82]客户端开始进行数据同步。</LogItem>
                    </LogList>
                  </ChartWrap>
                </Card>
              </TopRow>
              <MidRow>
                <Card $h={379}>
                  <Wave a={[0,120,60,90,130,62,230,62,300,62,430,70,550,16]} b={[0,200,120,222,200,130,250,70,300,60,450,90,550,90]}/>
                  <CardHead><CardTitle>容灾网络</CardTitle></CardHead>
                  <NetRow>
                    <NetBox><NetName>接管网络</NetName><NetValue><NetIcon1/><Num>2<Unit>个</Unit></Num></NetValue></NetBox>
                    <NetBox><NetName>EIP</NetName><NetValue><NetIcon2/><Num>0<Unit>个</Unit></Num></NetValue></NetBox>
                    <NetBox><NetName>验证网络</NetName><NetValue><NetIcon3/><Num>2<Unit>个</Unit></Num></NetValue></NetBox>
                  </NetRow>
                  <InfoRow><span>PXE网络服务：</span><Off><Dot $c="#8e939e"/>未启动</Off></InfoRow>
                  <InfoRow><span>DHCP：</span><span>-</span></InfoRow>
                </Card>
                <Card $h={379}>
                  <Wave a={[0,30,80,70,150,52,253,50,350,50,440,70,550,92]} b={[0,106,90,80,180,56,253,52,330,60,400,175,550,205]}/>
                  <CardHead>
                    <CardTitle>计算资源</CardTitle>
                    <CardNote><Dot $c="#1dd6a0"/>运行节点：2个</CardNote>
                  </CardHead>
                  <UseRow $mt={7}>
                    <Tile><ServerGear/></Tile>
                    <Meter>
                      <MeterHead><MeterLabel>使用率</MeterLabel><Percent>24%</Percent></MeterHead>
                      <Track><Fill $pct={24}/></Track>
                    </Meter>
                  </UseRow>
                  <Boxes>
                    <Box>
                      <Cell><Stack2 n="16" u="核" b/><CellLabel>CPU总核数</CellLabel></Cell>
                      <Cell><Stack2 n="4" u="核" b/><CellLabel>已用CPU核数</CellLabel></Cell>
                    </Box>
                    <Box>
                      <Cell><Stack2 n="63.99" u="GB" tight/><CellLabel>内存总容量</CellLabel></Cell>
                      <Cell><Stack2 n="20.08" u="GB" tight/><CellLabel>已用内存总容量</CellLabel></Cell>
                    </Box>
                  </Boxes>
                </Card>
                <Card $h={379}>
                  <Wave a={[0,2,60,30,120,44,212,44,300,46,450,70,550,92]} b={[0,66,80,55,150,44,212,44,300,50,340,170,550,199]}/>
                  <CardHead>
                    <CardTitle>存储资源</CardTitle>
                    <CardNote><Dot $c="#1dd6a0"/>运行节点：2个</CardNote>
                  </CardHead>
                  <UseRow $mt={8}>
                    <Tile><StorageGlyph/></Tile>
                    <Meter>
                      <MeterHead><MeterLabel>使用率</MeterLabel><Percent>60%</Percent></MeterHead>
                      <Track><Fill $pct={60}/></Track>
                    </Meter>
                  </UseRow>
                  <Boxes>
                    <Box>
                      <Cell><Stack2 n="2" u="个"/><CellLabel>存储LUN数</CellLabel></Cell>
                      <Cell><Stack2 n="0" u="个"/><CellLabel>已满存储lun</CellLabel></Cell>
                    </Box>
                    <Box>
                      <Cell><Stack2 n="1695.00" u="TB" tight/><CellLabel>总授权容量</CellLabel></Cell>
                      <Cell><Stack2 n="303.55" u="GB" tight/><CellLabel>备份已用存储容量</CellLabel></Cell>
                    </Box>
                  </Boxes>
                </Card>
              </MidRow>
              <Card $h={374} $mt={21}>
                <CardHead $h={72}>
                  <CardTitle>实时动态</CardTitle>
                  <LiveTools>
                    轮播间隔
                    <Select $w={81} $pl={12} $pr={5} $fs={13}>5<BigChev/></Select>
                    秒，每页显示
                    <Select $w={81} $pl={12} $pr={5} $fs={13}>5<BigChev/></Select>
                    条
                  </LiveTools>
                </CardHead>
                <TableHead>
                  <HeadCell>客户端名称</HeadCell>
                  <HeadCell $sep>客户端IP</HeadCell>
                  <HeadCell $sep>任务模式</HeadCell>
                  <HeadCell $sep>备份策略</HeadCell>
                  <HeadCell>实时信息</HeadCell>
                  <HeadCell $sep>操作</HeadCell>
                </TableHead>
              </Card>
            </Scroll>
            <Rail><Thumb/></Rail>
          </ScrollArea>
        </Main>
      </AppShell>
    </Window>
  );
}
